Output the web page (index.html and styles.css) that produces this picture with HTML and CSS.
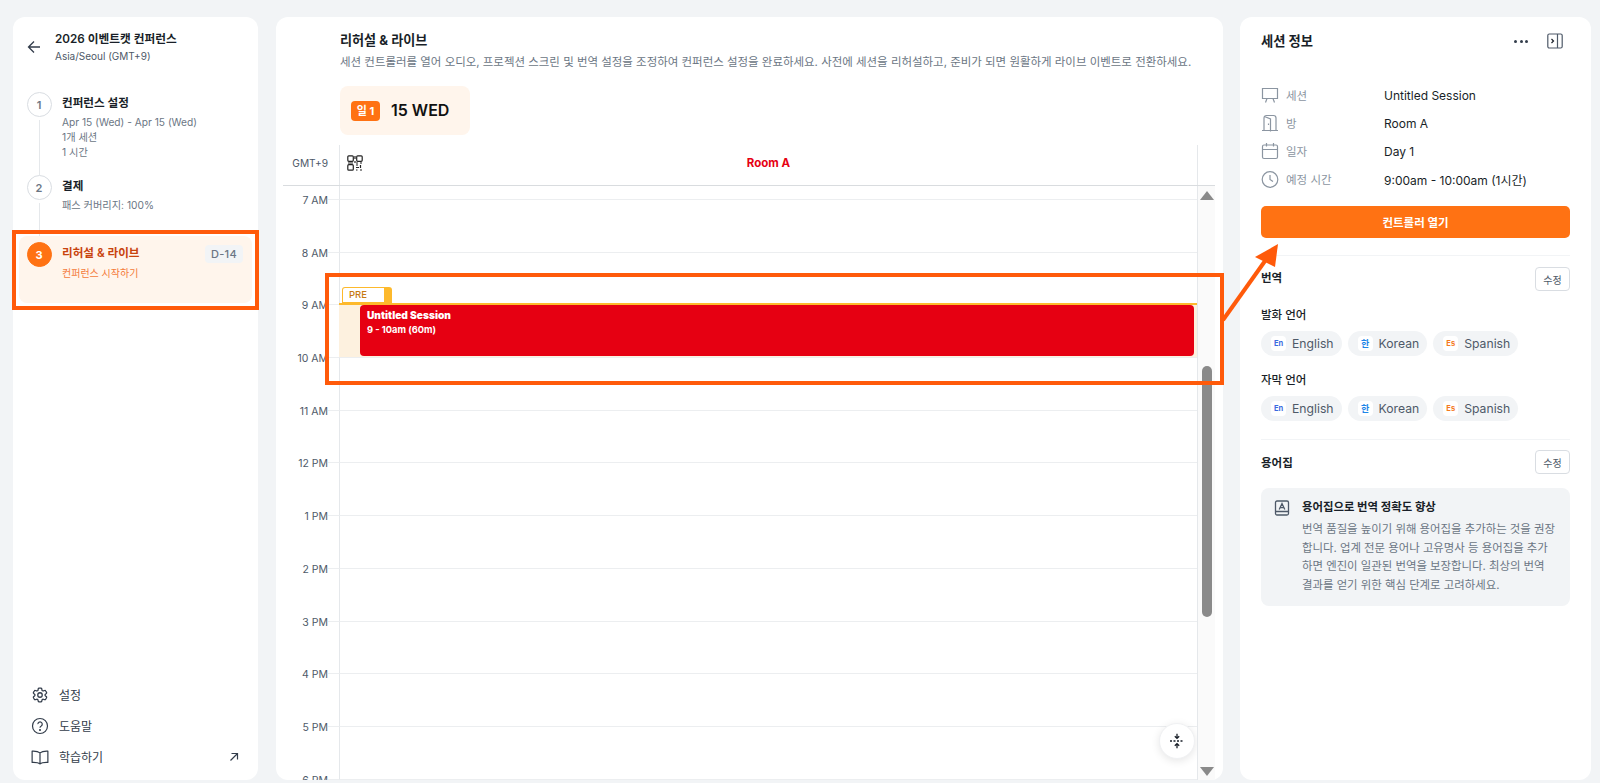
FILE: index.html
```html
<!DOCTYPE html>
<html lang="ko">
<head>
<meta charset="utf-8">
<title>리허설 &amp; 라이브</title>
<link rel="stylesheet" href="styles.css">
</head>
<body>
<aside class="panel left">
  <header class="event">
    <svg class="back" viewBox="0 0 14 14" width="14" height="14"><path d="M13 7H1.5M7 1.5 1.5 7 7 12.5" fill="none" stroke="#333d4b" stroke-width="1.3"/></svg>
    <div>
      <div class="event-title">2026 이벤트캣 컨퍼런스</div>
      <div class="event-sub">Asia/Seoul (GMT+9)</div>
    </div>
  </header>
  <ol class="steps">
    <li class="step step-one">
      <div class="rail"><span class="num">1</span><span class="conn"></span></div>
      <div class="step-body">
        <div class="step-title">컨퍼런스 설정</div>
        <div class="step-desc">Apr 15 (Wed) - Apr 15 (Wed)</div>
        <div class="step-desc">1개 세션</div>
        <div class="step-desc">1 시간</div>
      </div>
    </li>
    <li class="step step-two">
      <div class="rail"><span class="num">2</span><span class="conn"></span></div>
      <div class="step-body">
        <div class="step-title">결제</div>
        <div class="step-desc">패스 커버리지: 100%</div>
      </div>
    </li>
    <li class="step step-active">
      <div class="rail"><span class="num num-on">3</span></div>
      <div class="step-body grow">
        <div class="step-title title-on">리허설 &amp; 라이브</div>
        <div class="step-desc desc-on">컨퍼런스 시작하기</div>
      </div>
      <span class="dday">D-14</span>
    </li>
  </ol>
  <nav class="side-nav">
    <a class="nav-item"><svg viewBox="0 0 24 24" width="18" height="18" fill="none" stroke="#333d4b" stroke-width="1.7" stroke-linejoin="round"><path d="M9.6 3.9c.1-.6.7-1 1.3-1h2.2c.6 0 1.2.4 1.3 1l.2 1.5c.1.4.4.8.8 1 .4.2.9.2 1.3.1l1.400-.5c.6-.2 1.200 0 1.500.6l1.100 1.900c.3.5.2 1.200-.3 1.600l-1.200.9c-.3.300-.5.700-.5 1.100s.2.900.5 1.100l1.200.9c.5.4.6 1.100.3 1.600l-1.100 1.900c-.3.5-.9.8-1.500.6l-1.400-.5c-.4-.2-.9-.1-1.300.1-.4.2-.7.6-.8 1l-.2 1.500c-.1.6-.7 1-1.300 1h-2.200c-.6 0-1.200-.4-1.300-1l-.2-1.500c-.1-.4-.4-.8-.8-1-.4-.2-.9-.3-1.300-.1l-1.400.5c-.6.2-1.200 0-1.500-.6l-1.100-1.900c-.3-.5-.2-1.200.3-1.600l1.200-.9c.3-.2.5-.7.5-1.100s-.2-.8-.5-1.100l-1.200-.9c-.5-.4-.6-1.100-.3-1.600l1.100-1.900c.3-.6.9-.8 1.500-.6l1.400.5c.4.100.9.100 1.300-.1.4-.2.7-.6.8-1z"/><circle cx="12" cy="12" r="3"/></svg><span>설정</span></a>
    <a class="nav-item"><svg viewBox="0 0 24 24" width="18" height="18" fill="none" stroke="#333d4b" stroke-width="1.6"><circle cx="12" cy="12" r="10"/><path d="M9.200 9.500a2.900 2.900 0 1 1 4.500 2.400c-1 .6-1.700 1.200-1.700 2.400"/><circle cx="12" cy="17.300" r=".6" fill="#333d4b"/></svg><span>도움말</span></a>
    <a class="nav-item"><svg viewBox="0 0 24 24" width="18" height="18" fill="none" stroke="#333d4b" stroke-width="1.6" stroke-linejoin="round"><path d="M12 6.500C10 4.800 6 4 1.500 4.200v15C6 19 10 19.500 12 21c2-1.500 6-2 10.500-1.800v-15C18 4 14 4.800 12 6.500zM12 6.500V22"/></svg><span class="grow">학습하기</span><svg class="ext" viewBox="0 0 10 10" width="10" height="10" fill="none" stroke="#333d4b" stroke-width="1.200"><path d="M1.500 8.500 8.500 1.500M2.500 1.500h6v6"/></svg></a>
  </nav>
</aside>

<main class="panel center">
  <header class="intro">
    <h1>리허설 &amp; 라이브</h1>
    <p>세션 컨트롤러를 열어 오디오, 프로젝션 스크린 및 번역 설정을 조정하여 컨퍼런스 설정을 완료하세요. 사전에 세션을 리허설하고, 준비가 되면 원활하게 라이브 이벤트로 전환하세요.</p>
    <div class="date-card"><span class="day-badge">일 1</span><span class="date-text">15 WED</span></div>
  </header>
  <section class="calendar">
    <div class="cal-head">
      <div class="gmt">GMT+9</div>
      <div class="room">
        <svg class="qr" viewBox="0 0 16 16" width="16" height="16" fill="none" stroke="#222" stroke-width="1.200"><rect x=".8" y=".8" width="5.500" height="5.500" rx="1"/><rect x="9.700" y=".8" width="5.500" height="5.500" rx="1"/><rect x=".8" y="9.700" width="5.500" height="5.500" rx="1"/><path d="M1 8h5M9 8h2M13 8h2M8 1v3M8 6v2M9 10h2M9 12.500h3M13.500 10v3M9 15h1.500M13 15h2" /></svg>
        <span class="room-name">Room A</span>
      </div>
      <div class="head-gutter"></div>
    </div>
    <div class="cal-body">
      <div class="grid">
        <div class="row row-top"><span class="time"></span><span class="tick none"></span><span class="cell none"></span></div>
        <div class="row"><span class="time">7 AM</span><span class="tick"></span><span class="cell"></span></div>
        <div class="row"><span class="time">8 AM</span><span class="tick"></span><span class="cell"></span></div>
        <div class="row"><span class="time">9 AM</span><span class="tick"></span><span class="cell"></span></div>
        <div class="row"><span class="time">10 AM</span><span class="tick"></span><span class="cell"></span></div>
        <div class="row"><span class="time">11 AM</span><span class="tick"></span><span class="cell"></span></div>
        <div class="row"><span class="time">12 PM</span><span class="tick"></span><span class="cell"></span></div>
        <div class="row"><span class="time">1 PM</span><span class="tick"></span><span class="cell"></span></div>
        <div class="row"><span class="time">2 PM</span><span class="tick"></span><span class="cell"></span></div>
        <div class="row"><span class="time">3 PM</span><span class="tick"></span><span class="cell"></span></div>
        <div class="row"><span class="time">4 PM</span><span class="tick"></span><span class="cell"></span></div>
        <div class="row"><span class="time">5 PM</span><span class="tick"></span><span class="cell"></span></div>
        <div class="row"><span class="time">6 PM</span><span class="tick"></span><span class="cell"></span></div>
        <div class="pre-block">
          <div class="pre-tag"><span>PRE</span></div>
          <div class="session"><strong>Untitled Session</strong><strong class="session-time">9 - 10am (60m)</strong></div>
        </div>
        <button class="fab" aria-label="접기"><svg viewBox="0 0 16 16" width="16" height="16" fill="none" stroke="#191f28" stroke-width="1.300"><path d="M8 .8v4.200M5.800 3.200 8 5.400l2.200-2.200M8 15.200V11M5.800 12.800 8 10.600l2.200 2.200"/><path d="M1 8h14" stroke-dasharray="2 1.500"/></svg></button>
      </div>
      <div class="scrollbar">
        <span class="sb-up"></span>
        <span class="sb-space"></span>
        <span class="sb-thumb"></span>
        <span class="sb-space2"></span>
        <span class="sb-down"></span>
      </div>
    </div>
  </section>
</main>

<aside class="panel right">
  <header class="right-head">
    <h2>세션 정보</h2>
    <span class="dots"><i></i><i></i><i></i></span>
    <svg viewBox="0 0 16 16" width="16" height="16" fill="none" stroke="#4e5968" stroke-width="1.200"><rect x=".8" y="1" width="14.400" height="14" rx="1.500"/><path d="M10.500 1v14"/><path d="M4.500 6 6.500 8 4.500 10" stroke="#191f28"/></svg>
  </header>
  <dl class="info">
    <div class="info-row"><svg viewBox="0 0 18 18" width="18" height="18" fill="none" stroke="#8b95a1" stroke-width="1.200"><path d="M1.500 2.500h15v10h-15zM6 12.500l-1.500 4M12 12.500l1.500 4"/></svg><dt>세션</dt><dd>Untitled Session</dd></div>
    <div class="info-row"><svg viewBox="0 0 18 18" width="18" height="18" fill="none" stroke="#8b95a1" stroke-width="1.200"><path d="M1 16.500h16M3 16.500V4a2.500 2.500 0 0 1 2.500-2.500h7A2.500 2.500 0 0 1 15 4v12.500M3.500 2.500l6 2.500v12.500M9.500 5v12M7.500 9.500v1.500"/></svg><dt>방</dt><dd>Room A</dd></div>
    <div class="info-row"><svg viewBox="0 0 18 18" width="18" height="18" fill="none" stroke="#8b95a1" stroke-width="1.200"><rect x="1.500" y="3" width="15" height="13.500" rx="1.500"/><path d="M1.500 7.500h15M5.500 1v3.500M12.500 1v3.500"/></svg><dt>일자</dt><dd>Day 1</dd></div>
    <div class="info-row"><svg viewBox="0 0 18 18" width="18" height="18" fill="none" stroke="#8b95a1" stroke-width="1.200"><circle cx="9" cy="9.500" r="7.800"/><path d="M9 5v4.500l3 2"/></svg><dt>예정 시간</dt><dd>9:00am - 10:00am (1시간)</dd></div>
  </dl>
  <button class="primary">컨트롤러 열기</button>
  <section class="block block-lang">
    <div class="block-head"><h3>번역</h3><button class="edit">수정</button></div>
    <div class="lang-label">발화 언어</div>
    <div class="chips">
      <span class="chip"><b class="mark en">En</b>English</span>
      <span class="chip"><b class="mark ko">한</b>Korean</span>
      <span class="chip"><b class="mark es">Es</b>Spanish</span>
    </div>
    <div class="lang-label second">자막 언어</div>
    <div class="chips chips-second">
      <span class="chip"><b class="mark en">En</b>English</span>
      <span class="chip"><b class="mark ko">한</b>Korean</span>
      <span class="chip"><b class="mark es">Es</b>Spanish</span>
    </div>
  </section>
  <section class="block block-gloss">
    <div class="block-head"><h3>용어집</h3><button class="edit">수정</button></div>
    <div class="notice">
      <svg viewBox="0 0 16 16" width="16" height="16" fill="none" stroke="#4e5968" stroke-width="1.300"><rect x="1.500" y="1" width="13" height="14" rx="1.500"/><path d="M1.500 11.500h13M5.200 9.500 8 3.500l2.800 6M6.200 7.700h3.600"/></svg>
      <div>
        <div class="notice-title">용어집으로 번역 정확도 향상</div>
        <p>번역 품질을 높이기 위해 용어집을 추가하는 것을 권장합니다. 업계 전문 용어나 고유명사 등 용어집을 추가하면 엔진이 일관된 번역을 보장합니다. 최상의 번역 결과를 얻기 위한 핵심 단계로 고려하세요.</p>
      </div>
    </div>
  </section>
</aside>

<div class="mark-box mark-step"></div>
<div class="mark-box mark-session"></div>
<svg class="mark-arrow" viewBox="0 0 80 90" width="80" height="90"><path d="M3 80 45 21" stroke="#ff5a0a" stroke-width="4" fill="none"/><path d="M58 4 35 17 55 27z" fill="#ff5a0a"/></svg>
</body>
</html>
```
FILE: styles.css
```css
* { box-sizing: border-box; }
html, body { height: 100%; }
body {
  margin: 0;
  padding: 17px 9px 3px 13px;
  display: flex;
  gap: 18px;
  background: #f2f4f6;
  color: #191f28;
  font-family: Inter, "Noto Sans CJK KR", sans-serif;
  overflow: hidden;
  position: relative;
}
h1, h2, h3, p, dl, dd, ol { margin: 0; padding: 0; }
button { font-family: inherit; }
.panel { background: #fff; border-radius: 12px; height: 763px; }
.grow { flex: 1; }

/* left */
.left { width: 245px; flex: none; display: flex; flex-direction: column; padding: 0 6px; }
.event { display: flex; gap: 14px; padding: 14px 0 0 8px; height: 72px; align-items: flex-start; }
.back { margin-top: 9px; }
.event-title { font-size: 11.700px; font-weight: 600; line-height: 16px; }
.event-sub { font-size: 10px; color: #4e5968; line-height: 16px; margin-top: 1px; }
.steps { list-style: none; }
.step { display: flex; gap: 11px; padding-left: 8px; }
.step-one { height: 83px; margin-top: 3px; }
.step-two { height: 61px; }
.step-active { height: 67px; background: #fff5ec; border-radius: 8px; padding: 6px 9px 0 8px; margin-top: 0; }
.rail { width: 24px; display: flex; flex-direction: column; align-items: center; flex: none; }
.num { width: 25px; height: 25px; flex: none; border: 1px solid #d9dde2; border-radius: 50%; font-size: 11px; font-weight: 600; color: #6b7684; display: flex; align-items: center; justify-content: center; background: #fff; }
.num-on { background: #ff7213; border-color: #ff7213; color: #fff; font-weight: 700; }
.conn { flex: 1; width: 1px; background: #e5e8eb; margin-top: 3px; }
.step-title { font-size: 11.600px; font-weight: 600; line-height: 18px; color: #191f28; margin-top: 2px; }
.step-desc { font-size: 10.200px; line-height: 15px; color: #6b7684; }
.step-title + .step-desc { margin-top: 3px; }
.step-active .step-title { margin-top: 2px; }
.step-active .step-title + .step-desc { margin-top: 4px; }
.title-on { color: #c8430e; }
.desc-on { color: #f47a3a; font-size: 10px; }
.dday { font-size: 11px; font-weight: 500; color: #6b7684; background: #f2f4f6; border-radius: 4px; height: 18px; line-height: 18px; padding: 0 6px; margin-top: 3px; letter-spacing: .3px; }
.side-nav { margin-top: auto; padding: 0 0 8px 12px; }
.nav-item { display: flex; align-items: center; gap: 10px; height: 31px; font-size: 12px; color: #333d4b; }
.ext { margin-right: 13px; }

/* center */
.center { width: 947px; flex: none; display: flex; flex-direction: column; padding: 0 8px 0 7px; margin-right: -1px; overflow: hidden; }
.intro { padding: 14px 0 0 57px; height: 128px; }
.intro h1 { font-size: 13.100px; font-weight: 700; line-height: 18px; }
.intro p { font-size: 11.470px; line-height: 18px; color: #6b7684; margin-top: 4px; white-space: nowrap; }
.date-card { width: 130px; height: 49px; margin-top: 15px; background: #fff5ec; border-radius: 8px; display: flex; align-items: center; padding-left: 11px; gap: 11px; }
.day-badge { width: 29px; height: 20px; border-radius: 4px; background: #ff7213; color: #fff; font-size: 11px; font-weight: 700; text-align: center; line-height: 20px; }
.date-text { font-size: 16px; font-weight: 600; color: #111; margin-top: -1px; }
.calendar { flex: 1; display: flex; flex-direction: column; min-height: 0; }
.cal-head { display: flex; height: 41px; border-bottom: 1px solid #d9dcdf; flex: none; }
.gmt { width: 56px; padding: 8px 11px 0 0; text-align: right; font-size: 10.200px; color: #4e5968; line-height: 20px; }
.room { flex: 1; border-left: 1px solid #e5e8eb; display: flex; align-items: flex-start; padding: 10px 0 0 7px; }
.room-name { flex: 1; text-align: center; font-size: 11.500px; font-weight: 700; color: #e60012; line-height: 18px; margin-left: -7px; padding-right: 16px; margin-top: -1px; }
.head-gutter { width: 18px; border-left: 1px solid #e5e8eb; }
.cal-body { flex: 1; display: flex; min-height: 0; }
.grid { flex: 1; position: relative; overflow: hidden; }
.row { display: flex; height: 52.700px; }
.row-top { height: 13px; }
.time { width: 45px; flex: none; text-align: right; font-size: 10.500px; color: #4e5968; line-height: 14px; margin-top: -5px; height: 14px; }
.row-top .time { margin-top: 0; }
.tick { width: 11px; flex: none; border-top: 1px solid #eceef0; }
.cell { flex: 1; border-top: 1px solid #eceef0; border-left: 1px solid #e5e8eb; }
.none { border-top: 0; }
.pre-block { position: absolute; left: 56px; right: 0; top: 117px; height: 54px; background: #fdf1df; border-top: 2px solid #fdb92c; }
.pre-tag { position: absolute; left: 3px; top: -18px; width: 50px; height: 16px; border: 1px solid #fdb92c; border-right: 8px solid #fdb92c; border-radius: 3px 3px 0 0; background: #fff; font-size: 9.500px; color: #c77a12; line-height: 14px; padding-left: 6px; font-weight: 500; }
.session { position: absolute; left: 21px; right: 3px; top: 0; bottom: 1px; background: #e60012; border-radius: 4px; padding: 4px 7px; color: #fff; font-size: 10.200px; font-weight: 800; line-height: 13.500px; display: flex; flex-direction: column; }
.session-time { font-size: 9.300px; font-weight: 700; }
.fab { position: absolute; right: 2px; bottom: 21px; width: 36px; height: 36px; border-radius: 50%; border: 1px solid #f0f1f3; background: #fff; box-shadow: 0 2px 8px rgba(0,0,0,.1); padding: 0; display: flex; align-items: center; justify-content: center; }
.scrollbar { width: 18px; flex: none; background: #fafafa; border-left: 1px solid #e5e8eb; display: flex; flex-direction: column; align-items: center; padding-top: 5px; }
.sb-up { width: 0; height: 0; border: 7px solid transparent; border-top: 0; border-bottom: 9px solid #8a8a8a; }
.sb-space { height: 166px; flex: none; }
.sb-thumb { width: 10px; height: 251px; border-radius: 5px; background: #8a8a8a; flex: none; }
.sb-space2 { height: 150px; flex: none; }
.sb-down { width: 0; height: 0; border: 7px solid transparent; border-bottom: 0; border-top: 9px solid #8a8a8a; }

/* right */
.right { width: 351px; flex: none; padding: 0 21px; }
.right-head { display: flex; align-items: center; height: 48px; }
.right-head h2 { flex: 1; font-size: 13.300px; font-weight: 700; margin-top: -1px; }
.dots { display: flex; gap: 2.500px; margin-right: 19px; }
.dots i { width: 3px; height: 3px; border-radius: 50%; background: #333d4b; }
.right-head svg { margin-right: 7px; }
.info { padding-top: 16px; }
.info-row { display: flex; align-items: center; height: 28px; font-size: 11.500px; }
.info-row svg { flex: none; }
.info-row dt { width: 98px; margin-left: 7px; color: #8b95a1; }
.info-row dd { color: #191f28; font-size: 12px; }
.primary { width: 100%; height: 32px; margin-top: 13px; border: 0; border-radius: 5px; background: #ff7213; color: #fff; font-size: 11.500px; font-weight: 700; display: block; }
.block { border-top: 1px solid #f2f4f6; }
.block-lang { margin-top: 17px; height: 184px; padding-top: 11px; }
.block-lang h3 { margin-top: -4px; }
.block-gloss { padding-top: 10px; }
.block-head { display: flex; align-items: center; justify-content: space-between; height: 24px; }
.block-head h3 { font-size: 11.500px; font-weight: 700; }
.edit { width: 35px; height: 24px; border: 1px solid #d9dde2; border-radius: 4px; background: #fff; font-size: 10px; color: #4e5968; padding: 0; }
.lang-label { font-size: 11.500px; font-weight: 500; line-height: 18px; margin-top: 15px; }
.lang-label.second { margin-top: 15px; }
.chips { display: flex; gap: 6px; margin-top: 7px; }
.chips-second { margin-top: 7px; }
.chip { height: 25px; border-radius: 13px; background: #f2f4f6; display: flex; align-items: center; padding: 0 8px 0 10px; gap: 6px; font-size: 12.200px; color: #4e5968; }
.mark { width: 15px; height: 15px; border-radius: 4px; background: #fff; font-size: 7.500px; font-weight: 700; text-align: center; line-height: 15px; flex: none; }
.mark.en { color: #3b6be0; }
.mark.ko { color: #1e86e8; font-size: 9px; }
.mark.es { color: #f47a1f; }
.notice { margin-top: 14px; height: 118px; background: #f2f4f6; border-radius: 8px; padding: 11px 13px 0 13px; display: flex; gap: 12px; }
.notice svg { flex: none; margin-top: 1px; }
.notice-title { font-size: 11.400px; font-weight: 700; line-height: 16px; }
.notice p { font-size: 11.400px; line-height: 18.700px; color: #6b7684; margin-top: 5px; word-break: break-all; }

/* annotation overlays */
.mark-box { position: absolute; border: 4px solid #ff5a0a; }
.mark-step { left: 12px; top: 230px; width: 247px; height: 80px; }
.mark-session { left: 325px; top: 273px; width: 899px; height: 112px; }
.mark-arrow { position: absolute; left: 1220px; top: 240px; }
```
